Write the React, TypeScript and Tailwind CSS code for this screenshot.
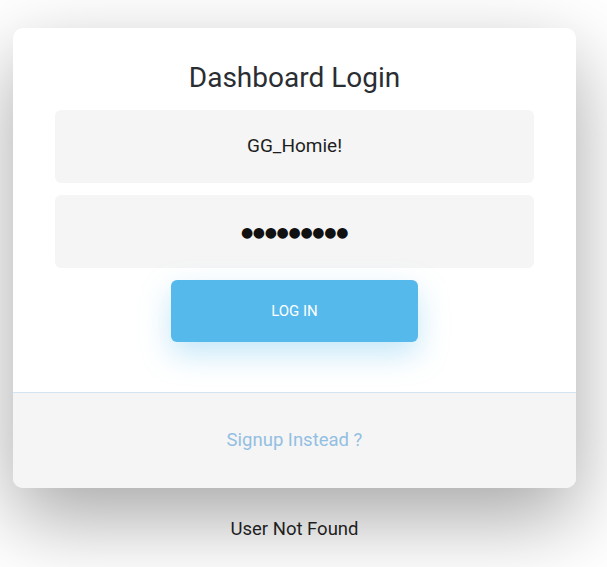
import React from "react";

export default function App() {
  const font = { fontFamily: "Roboto, 'Noto Sans', sans-serif" };
  return (
    <div className="min-h-[567px] w-[607px] bg-white overflow-hidden" style={font}>
      <div className="pt-[28px] pl-[13px] flex flex-col w-[576px]">
        <div className="w-[563px] rounded-[10px] bg-white shadow-[0_30px_80px_rgba(0,0,0,0.35)] overflow-hidden">
          <div className="px-[42px] pt-[30px] pb-[50px] flex flex-col items-center">
            <h1 className="text-[28px] leading-[40px] text-[#2a2e33] font-normal mb-[12px]">Dashboard Login</h1>
            <div className="w-full h-[73px] rounded-[6px] bg-[#f5f5f5] flex items-center justify-center text-[19px] text-[#1e1e1e]">
              GG_Homie!
            </div>
            <div className="w-full h-[73px] mt-[12px] rounded-[6px] bg-[#f5f5f5] flex items-center justify-center text-[14px] tracking-[-0.3px] text-[#111] pt-[2px]" style={{ fontFamily: "'DejaVu Sans', sans-serif" }}>
              ●●●●●●●●●
            </div>
            <button className="mt-[12px] w-[247px] h-[62px] rounded-[6px] bg-[#56b9ec] text-white text-[15px] uppercase shadow-[0_12px_30px_rgba(86,185,236,0.35)]">
              Log In
            </button>
          </div>
          <div className="border-t border-[#d3e5f3] bg-[#f5f5f5] h-[96px] flex items-center justify-center text-[18.5px] text-[#93bfe2]">
            Signup Instead ?
          </div>
        </div>
        <div className="mt-[28px] text-center text-[18.5px] text-[#1e1e1e]">User Not Found</div>
      </div>
    </div>
  );
}
